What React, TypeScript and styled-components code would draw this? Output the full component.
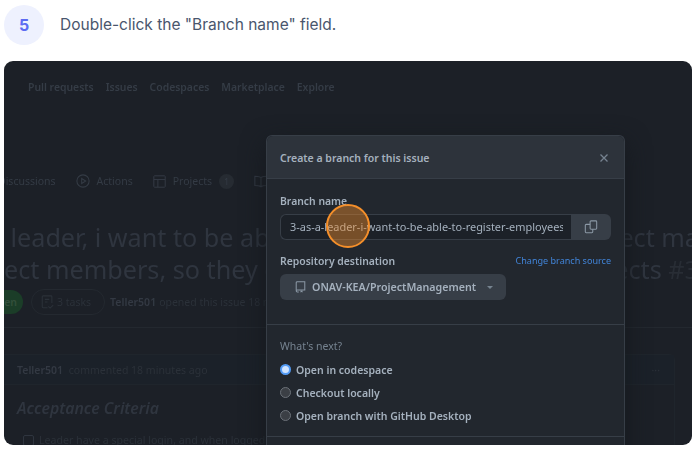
import React from "react";
import styled, { createGlobalStyle } from "styled-components";

const Global = createGlobalStyle`
  html, body { margin: 0; padding: 0; background: #fff; overflow: hidden; }
  body { width: 698px; height: 455px; font-family: "Noto Sans", sans-serif; }
`;

const Page = styled.main`
  width: 698px;
  height: 455px;
  padding: 5px 6px 10px 4px;
  box-sizing: border-box;
  display: flex;
  flex-direction: column;
  gap: 16px;
`;
const StepHeader = styled.header`
  display: flex;
  align-items: center;
  gap: 16px;
  height: 40px;
`;
const StepBadge = styled.div`
  width: 40px;
  height: 40px;
  border-radius: 50%;
  background: #eef1fe;
  color: #5d6bf2;
  font: 700 16px/40px Inter, sans-serif;
  text-align: center;
`;
const StepText = styled.p`
  margin: 0 0 1px;
  color: #49566d;
  font: 400 15.5px/20px Inter, sans-serif;
`;
const Shot = styled.section`
  position: relative;
  height: 384px;
  border-radius: 9px;
  overflow: hidden;
  background: #1c2027;
  color: #353c46;
  filter: blur(0.25px);
`;
const Backdrop = styled.div`
  display: flex;
  flex-direction: column;
`;
const Nav = styled.nav`
  display: flex;
  gap: 12px;
  padding: 18px 0 0 24px;
  font: 600 10.4px/16px "Noto Sans", sans-serif;
`;
const Tabs = styled.div`
  display: flex;
  align-items: center;
  margin: 78px 0 0 -6px;
  height: 16px;
  font: 400 10.5px/16px "Noto Sans", sans-serif;
  color: #343b45;
`;
const Tab = styled.span`
  display: flex;
  align-items: center;
  gap: 7px;
  margin-right: 20px;
`;
const Counter = styled.span`
  width: 15px;
  height: 15px;
  border-radius: 50%;
  background: #262b32;
  font-size: 9px;
  line-height: 15px;
  text-align: center;
`;
const Title = styled.div`
  margin-top: 32px;
  display: flex;
  flex-direction: column;
`;
const TitleLine = styled.div`
  display: flex;
  justify-content: space-between;
  white-space: nowrap;
  overflow: hidden;
  height: 32px;
  font: 400 25.2px/32px "Noto Sans", sans-serif;
  color: #2f353f;
`;
const TitleEnd = styled.span`
  margin-right: -7px;
`;
const TitleRef = styled.span`
  color: #282d35;
`;
const Meta = styled.div`
  display: flex;
  align-items: center;
  height: 26px;
  margin: 4px 0 0 -20px;
  font: 400 10.5px/16px "Noto Sans", sans-serif;
  white-space: nowrap;
  color: #2b3139;
`;
const OpenPill = styled.span`
  width: 39px;
  height: 24px;
  border-radius: 0 12px 12px 0;
  background: #1b3d28;
  color: #33503b;
  font-weight: 600;
  line-height: 24px;
  text-align: right;
  padding-right: 6px;
  box-sizing: border-box;
`;
const TasksPill = styled.span`
  display: flex;
  align-items: center;
  gap: 3px;
  height: 24px;
  margin: 0 5px 0 8px;
  padding: 0 13px 0 9px;
  border: 1px solid #242930;
  border-radius: 13px;
`;
const MetaAuthor = styled.strong`
  font-weight: 600;
  margin-right: 3px;
  color: #333943;
`;
const Rule = styled.hr`
  margin: 12px 0 0;
  border: 0;
  border-top: 1px solid #23282f;
`;
const Comment = styled.article`
  margin: 26px 17px 0 0;
  border: 1px solid #1f252c;
  border-left: 0;
  border-radius: 0 6px 0 0;
  height: 200px;
`;
const CommentHead = styled.div`
  display: flex;
  justify-content: space-between;
  align-items: center;
  height: 30px;
  box-sizing: border-box;
  padding: 0 14px 0 13px;
  background: #1b2129;
  border-bottom: 1px solid #1f252c;
  font: 400 10.5px/16px "Noto Sans", sans-serif;
  color: #2b3139;
`;
const CommentBody = styled.div`
  padding: 13px 0 0 13px;
`;
const Criteria = styled.h3`
  margin: 0;
  font: italic 600 15.8px/20px "Noto Sans", sans-serif;
  color: #2f353f;
`;
const Task = styled.div`
  display: flex;
  align-items: center;
  gap: 5px;
  margin: 14px 0 0 6px;
  font: 400 10.6px/16px "Noto Sans", sans-serif;
  color: #2b3139;
`;
const TaskBox = styled.span`
  width: 11px;
  height: 11px;
  box-sizing: border-box;
  border: 1px solid #2f353f;
  border-radius: 2px;
`;

const Dialog = styled.aside`
  position: absolute;
  left: 262px;
  top: 74px;
  width: 359px;
  height: 330px;
  box-sizing: border-box;
  background: #22272e;
  border: 1px solid #373e47;
  border-bottom: 0;
  border-radius: 6px 6px 0 0;
  box-shadow: 0 8px 24px #15191e;
  color: #adbac7;
`;
const DialogHead = styled.div`
  display: flex;
  justify-content: space-between;
  align-items: center;
  height: 41px;
  padding: 1px 15px 0 13px;
  background: #2d333b;
  border-bottom: 1px solid #373e47;
  border-radius: 6px 6px 0 0;
`;
const DialogTitle = styled.h2`
  margin: 0;
  font: 600 10.5px/16px "Noto Sans", sans-serif;
  color: #a5b1be;
`;
const CloseBtn = styled.span`
  display: flex;
  color: #768390;
`;
const DialogBody = styled.div`
  padding: 14px 13px 24px;
  border-bottom: 1px solid #373e47;
`;
const FieldLabel = styled.label`
  display: block;
  font: 600 10.4px/16px "Noto Sans", sans-serif;
  color: #a5b1be;
`;
const FieldRow = styled.div`
  display: flex;
  height: 26px;
  margin-top: 5px;
`;
const Input = styled.div`
  flex: 1;
  min-width: 0;
  padding: 0 8px 0 9px;
  border: 1px solid #373e47;
  border-right: 0;
  border-radius: 6px 0 0 6px;
  background: #1c2128;
  font: 400 10.95px/24px "Noto Sans", sans-serif;
  color: #a5b1be;
`;
const InputText = styled.div`
  white-space: nowrap;
  overflow: hidden;
`;
const CopyBtn = styled.span`
  width: 40px;
  display: flex;
  align-items: center;
  justify-content: center;
  border-radius: 0 6px 6px 0;
  background: #373e47;
  color: #8b98a5;
`;
const RepoHead = styled.div`
  display: flex;
  justify-content: space-between;
  align-items: center;
  margin-top: 13px;
`;
const SourceLink = styled.a`
  font: 400 9.05px/16px "Noto Sans", sans-serif;
  color: #4184d8;
`;
const RepoSelect = styled.div`
  display: flex;
  align-items: center;
  width: 226px;
  height: 26px;
  margin-top: 5px;
  padding-left: 15px;
  gap: 6px;
  box-sizing: border-box;
  border-radius: 6px;
  background: #373e47;
  font: 600 10.67px/16px "Noto Sans", sans-serif;
  color: #a5b1be;
`;
const Caret = styled.span`
  margin-left: 5px;
  border-left: 3px solid transparent;
  border-right: 3px solid transparent;
  border-top: 3px solid #768390;
`;
const Next = styled.div`
  padding: 13px 13px 9px;
  border-bottom: 1px solid #373e47;
`;
const NextLabel = styled.div`
  font: 400 10.5px/16px "Noto Sans", sans-serif;
  color: #768390;
  margin-bottom: 4px;
`;
const Option = styled.div`
  display: flex;
  align-items: center;
  gap: 5px;
  height: 23px;
  font: 600 10.5px/16px "Noto Sans", sans-serif;
  color: #a5b1be;
`;
const Radio = styled.span<{ $on?: boolean }>`
  width: 11px;
  height: 11px;
  border-radius: 50%;
  box-sizing: border-box;
  background: ${(p) => (p.$on ? "#cfe3ff" : "#3b3f45")};
  border: ${(p) => (p.$on ? "2.5px solid #539bf5" : "1px solid #6b7178")};
`;
const Cursor = styled.div`
  position: absolute;
  left: 322px;
  top: 143px;
  width: 44px;
  height: 44px;
  box-sizing: border-box;
  border-radius: 50%;
  border: 2px solid #f58f2a;
  background: rgba(245, 143, 42, 0.42);
`;

const CopyIcon = () => (
  <svg width="14" height="14" viewBox="0 0 16 16" fill="none" stroke="currentColor" strokeWidth="1.2">
    <rect x="7" y="1" width="7.5" height="9.5" rx="1" />
    <path d="M7 5H2.5a1 1 0 0 0-1 1v7.5a1 1 0 0 0 1 1H9a1 1 0 0 0 1-1v-3" />
  </svg>
);
const RepoIcon = () => (
  <svg width="11" height="12" viewBox="0 0 12 14" fill="none" stroke="#8b98a5" strokeWidth="1.2">
    <path d="M1 11V2a1.2 1.2 0 0 1 1.2-1.2H11V10.5H2.2A1.2 1.2 0 0 0 1 11.7a1.2 1.2 0 0 0 1.2 1.1H4" />
    <path d="M6 11v2.5l1.2-.8 1.2.8V11z" fill="#8b98a5" stroke="none" />
  </svg>
);
const PlayIcon = () => (
  <svg width="14" height="14" viewBox="0 0 16 16" fill="none" stroke="currentColor" strokeWidth="1.2">
    <circle cx="8" cy="8" r="7" />
    <path d="M6.5 5.2v5.6L11 8z" />
  </svg>
);
const TableIcon = () => (
  <svg width="13" height="13" viewBox="0 0 16 16" fill="none" stroke="currentColor" strokeWidth="1.2">
    <rect x="1" y="1" width="14" height="14" rx="1" />
    <path d="M1 5.5h14M6 5.5V15" />
  </svg>
);
const BookIcon = () => (
  <svg width="14" height="13" viewBox="0 0 16 14" fill="none" stroke="currentColor" strokeWidth="1.2">
    <path d="M8 2.5C6.5 1.2 4 1 1 1v10.5c3 0 5.5.2 7 1.5 1.5-1.3 4-1.5 7-1.5V1c-3 0-5.5.2-7 1.5zM8 2.5V13" />
  </svg>
);
const TasksIcon = () => (
  <svg width="13" height="14" viewBox="0 0 14 16" fill="none" stroke="currentColor" strokeWidth="1.2">
    <path d="M7 14.5H2a1 1 0 0 1-1-1V2a1 1 0 0 1 1-1h9a1 1 0 0 1 1 1v7M4 5h5M4 8h3M8 13l2 2 3.5-3.5" />
  </svg>
);
const XIcon = () => (
  <svg width="10" height="10" viewBox="0 0 10 10" stroke="currentColor" strokeWidth="1.3" fill="none">
    <path d="M1.5 1.5l7 7M8.5 1.5l-7 7" />
  </svg>
);

export default function App() {
  return (
    <>
      <Global />
      <Page>
        <StepHeader>
          <StepBadge>5</StepBadge>
          <StepText>Double-click the "Branch name" field.</StepText>
        </StepHeader>
        <Shot>
          <Backdrop>
            <Nav>
              <span>Pull requests</span>
              <span>Issues</span>
              <span>Codespaces</span>
              <span>Marketplace</span>
              <span>Explore</span>
            </Nav>
            <Tabs>
              <Tab>Discussions</Tab>
              <Tab><PlayIcon />Actions</Tab>
              <Tab><TableIcon />Projects<Counter>1</Counter></Tab>
              <Tab><BookIcon />Wiki</Tab>
            </Tabs>
            <Title>
              <TitleLine>
                <span>&nbsp;leader, i want to be able to</span>
                <TitleEnd>ect ma</TitleEnd>
              </TitleLine>
              <TitleLine>
                <span>ect members, so they can be</span>
                <TitleEnd>ects <TitleRef>#3</TitleRef></TitleEnd>
              </TitleLine>
            </Title>
            <Meta>
              <OpenPill>en</OpenPill>
              <TasksPill><TasksIcon />3 tasks</TasksPill>
              <MetaAuthor>Teller501</MetaAuthor> opened this issue 18 minutes ago
            </Meta>
            <Rule />
            <Comment>
              <CommentHead>
                <span><MetaAuthor>Teller501</MetaAuthor> commented 18 minutes ago</span>
                <span>···</span>
              </CommentHead>
              <CommentBody>
                <Criteria>Acceptance Criteria</Criteria>
                <Task><TaskBox />Leader have a special login, and when logged in</Task>
              </CommentBody>
            </Comment>
          </Backdrop>
          <Dialog>
            <DialogHead>
              <DialogTitle>Create a branch for this issue</DialogTitle>
              <CloseBtn><XIcon /></CloseBtn>
            </DialogHead>
            <DialogBody>
              <FieldLabel>Branch name</FieldLabel>
              <FieldRow>
                <Input><InputText>3-as-a-leader-i-want-to-be-able-to-register-employees-as-project</InputText></Input>
                <CopyBtn><CopyIcon /></CopyBtn>
              </FieldRow>
              <RepoHead>
                <FieldLabel>Repository destination</FieldLabel>
                <SourceLink>Change branch source</SourceLink>
              </RepoHead>
              <RepoSelect><RepoIcon />ONAV-KEA/ProjectManagement<Caret /></RepoSelect>
            </DialogBody>
            <Next>
              <NextLabel>What's next?</NextLabel>
              <Option><Radio $on />Open in codespace</Option>
              <Option><Radio />Checkout locally</Option>
              <Option><Radio />Open branch with GitHub Desktop</Option>
            </Next>
          </Dialog>
          <Cursor />
        </Shot>
      </Page>
    </>
  );
}
